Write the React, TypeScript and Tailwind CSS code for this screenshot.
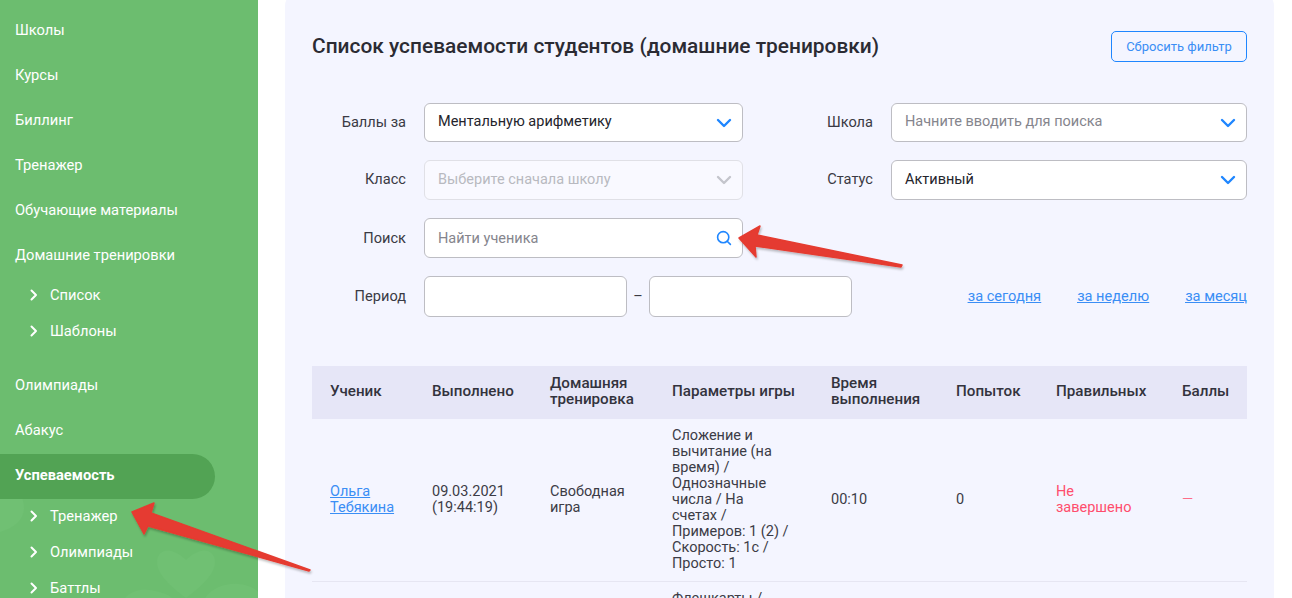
const font = { fontFamily: '"Roboto", "Liberation Sans", sans-serif' };

function Chevron({ muted = false }: { muted?: boolean }) {
  return (
    <svg width="16" height="10" viewBox="0 0 16 10" fill="none" className="shrink-0">
      <path d="M2 2l6 6 6-6" stroke={muted ? "#c4c5cc" : "#1f86ff"} strokeWidth="2.4" strokeLinecap="round" strokeLinejoin="round" />
    </svg>
  );
}

function SideChevron() {
  return (
    <svg width="8" height="12" viewBox="0 0 8 12" fill="none" className="shrink-0">
      <path d="M1.5 1.5L6 6l-4.5 4.5" stroke="#fff" strokeWidth="2" strokeLinecap="round" strokeLinejoin="round" />
    </svg>
  );
}

function Top({ label, active = false }: { label: string; active?: boolean }) {
  return (
    <div className={active ? "h-[45px] w-[215px] rounded-r-[23px] bg-[#52a354] pl-[15px] pb-[2px] flex items-center font-bold text-white text-[14.7px]" : "h-[45px] pl-[15px] pb-[2px] flex items-center text-white text-[14.7px]"}>
      {label}
    </div>
  );
}

function Sub({ label }: { label: string }) {
  return (
    <div className="h-[36px] pl-[30px] flex items-center gap-[12px] text-white text-[14.7px]">
      <SideChevron />
      <span>{label}</span>
    </div>
  );
}

function Label({ children, w, className = "" }: { children: string; w: string; className?: string }) {
  return <div className={`${w} ${className} shrink-0 pr-[18px] text-right text-[14.6px] text-[#3a3a44]`}>{children}</div>;
}

function Select({ text, tone, w, h }: { text: string; tone: "dark" | "gray" | "off"; w: string; h: string }) {
  const off = tone === "off";
  const color = tone === "dark" ? "text-[#24242c]" : tone === "gray" ? "text-[#85858d]" : "text-[#b8b9c0]";
  return (
    <div className={`${w} ${h} shrink-0 rounded-[6px] border flex items-center justify-between pl-[13px] pr-[10px] text-[14.5px] ${off ? "bg-[#f9f9ff] border-[#e0e0e6]" : "bg-white border-[#bdbdc3]"} ${color}`}>
      <span className="pb-[1px]">{text}</span>
      <Chevron muted={off} />
    </div>
  );
}

function Th({ children, w }: { children: React.ReactNode; w: string }) {
  return <th className={`${w} pl-[18px] pr-0 pb-[4px] text-left align-middle font-medium text-[15.2px] leading-[16px] text-[#33333d]`}>{children}</th>;
}

function Td({ children, className = "" }: { children: React.ReactNode; className?: string }) {
  return <td className={`pl-[18px] pr-0 align-middle text-[14.5px] leading-[16px] text-[#3c3c46] ${className}`}>{children}</td>;
}

export default function App() {
  return (
    <div className="relative flex h-[598px] w-[1292px] overflow-hidden bg-white" style={font}>
      <aside className="relative w-[258px] shrink-0 overflow-hidden bg-[#6cbd6f] pt-[9px]">
        <svg className="absolute left-0 top-[470px]" width="258" height="128" viewBox="0 0 258 128" fill="#70c073">
          <path d="M186 128C170 116 157 104 157 92C157 82 166 78 174 82C180 84 184 88 186 90C188 88 192 84 198 82C206 78 215 82 215 92C215 104 202 116 186 128Z" />
          <path d="M125 128C130 122 140 118 150 120C160 122 168 124 172 128Z" />
          <path d="M205 128C212 118 225 113 238 114C248 115 255 118 258 122V128Z" />
          <path d="M0 10C12 10 24 22 24 38C24 50 14 58 0 62Z" />
        </svg>
        <div className="relative">
          <Top label="Школы" />
          <Top label="Курсы" />
          <Top label="Биллинг" />
          <Top label="Тренажер" />
          <Top label="Обучающие материалы" />
          <Top label="Домашние тренировки" />
          <div className="-mt-[2px]">
            <Sub label="Список" />
            <Sub label="Шаблоны" />
          </div>
          <div className="h-[15px]" />
          <Top label="Олимпиады" />
          <Top label="Абакус" />
          <Top label="Успеваемость" active />
          <div className="-mt-[1px]">
            <Sub label="Тренажер" />
            <Sub label="Олимпиады" />
            <Sub label="Баттлы" />
          </div>
        </div>
      </aside>

      <main className="ml-[27px] h-[640px] w-[989px] shrink-0 -mt-[8px] rounded-[14px] bg-[#f4f5ff] px-[27px] pt-[38px]">
        <div className="flex items-start justify-between">
          <h1 className="mt-[1px] text-[20.9px] font-medium leading-[30px] text-[#2b2b33]">Список успеваемости студентов (домашние тренировки)</h1>
          <button className="mt-[1px] h-[31px] w-[136px] rounded-[5px] border border-[#1f86ff] text-[13px] text-[#3a8ef5]">Сбросить фильтр</button>
        </div>

        <div className="mt-[41px] flex items-center">
          <Label w="w-[112px]">Баллы за</Label>
          <Select text="Ментальную арифметику" tone="dark" w="w-[319px]" h="h-[39px]" />
          <Label w="w-[148px]">Школа</Label>
          <Select text="Начните вводить для поиска" tone="gray" w="w-[356px]" h="h-[39px]" />
        </div>
        <div className="mt-[18px] flex items-center">
          <Label w="w-[112px]">Класс</Label>
          <Select text="Выберите сначала школу" tone="off" w="w-[319px]" h="h-[40px]" />
          <Label w="w-[148px]">Статус</Label>
          <Select text="Активный" tone="dark" w="w-[356px]" h="h-[40px]" />
        </div>
        <div className="mt-[18px] flex items-center">
          <Label w="w-[112px]" className="pt-[2px]">Поиск</Label>
          <div className="flex h-[40px] w-[319px] shrink-0 items-center justify-between rounded-[6px] border border-[#bdbdc3] bg-white pl-[13px] pr-[10px] text-[14.5px] text-[#85858d]">
            <span className="pt-[1px]">Найти ученика</span>
            <svg width="16" height="16" viewBox="0 0 16 16" fill="none">
              <circle cx="7.2" cy="7.2" r="5.6" stroke="#1f86ff" strokeWidth="1.6" />
              <path d="M11.2 11.2L14.4 14.4" stroke="#1f86ff" strokeWidth="1.6" strokeLinecap="round" />
            </svg>
          </div>
        </div>
        <div className="mt-[18px] flex items-center">
          <Label w="w-[112px]">Период</Label>
          <div className="h-[41px] w-[203px] shrink-0 rounded-[6px] border border-[#bdbdc3] bg-white" />
          <div className="w-[22px] text-center text-[14.5px] text-[#3a3a44]">–</div>
          <div className="h-[41px] w-[203px] shrink-0 rounded-[6px] border border-[#bdbdc3] bg-white" />
          <div className="ml-auto flex gap-[36px] text-[14.6px] text-[#3a8ef5] underline">
            <a>за сегодня</a>
            <a>за неделю</a>
            <a>за месяц</a>
          </div>
        </div>

        <table className="mt-[49px] w-[935px] table-fixed border-collapse">
          <thead>
            <tr className="h-[53px] bg-[#e6e6f7]">
              <Th w="w-[102px]">Ученик</Th>
              <Th w="w-[118px]">Выполнено</Th>
              <Th w="w-[122px]">Домашняя тренировка</Th>
              <Th w="w-[159px]">Параметры игры</Th>
              <Th w="w-[125px]">Время выполнения</Th>
              <Th w="w-[100px]">Попыток</Th>
              <Th w="w-[126px]">Правильных</Th>
              <Th w="w-[83px]">Баллы</Th>
            </tr>
          </thead>
          <tbody>
            <tr className="h-[162px] border-b border-[#e6e6f2]">
              <Td><a className="text-[#3a8ef5] underline">Ольга Тебякина</a></Td>
              <Td>09.03.2021 (19:44:19)</Td>
              <Td>Свободная игра</Td>
              <Td className="pr-[30px]">{"Сложение и вычитание (на время) / Однозначные числа / На счетах / Примеров:\u00a01\u00a0(2)\u00a0/ Скорость: 1с / Просто: 1"}</Td>
              <Td>00:10</Td>
              <Td>0</Td>
              <Td className="!text-[#ff4d6d] pr-[30px]">Не завершено</Td>
              <Td className="!text-[#ff4d6d] font-light">—</Td>
            </tr>
            <tr>
              <Td>{""}</Td>
              <Td>{""}</Td>
              <Td>{""}</Td>
              <Td className="pt-[9px]">Флешкарты /</Td>
              <Td>{""}</Td>
              <Td>{""}</Td>
              <Td>{""}</Td>
              <Td>{""}</Td>
            </tr>
          </tbody>
        </table>
      </main>

      <svg className="absolute left-0 top-0 pointer-events-none" width="1292" height="598" viewBox="0 0 1292 598" fill="none">
        <defs>
          <filter id="s" x="-10%" y="-30%" width="120%" height="170%">
            <feDropShadow dx="1" dy="2" stdDeviation="1" floodColor="#000" floodOpacity="0.25" />
          </filter>
        </defs>
        <path d="M739 238L760 226L757 235L902 265L901 267L755 246L756 257Z" fill="#e53b30" stroke="#e53b30" strokeWidth="1.5" strokeLinejoin="round" filter="url(#s)" />
        <path d="M132 512L154 503L151 513L310 570L309 571L148 526L144 534Z" fill="#e53b30" stroke="#e53b30" strokeWidth="1.5" strokeLinejoin="round" filter="url(#s)" />
      </svg>
    </div>
  );
}
